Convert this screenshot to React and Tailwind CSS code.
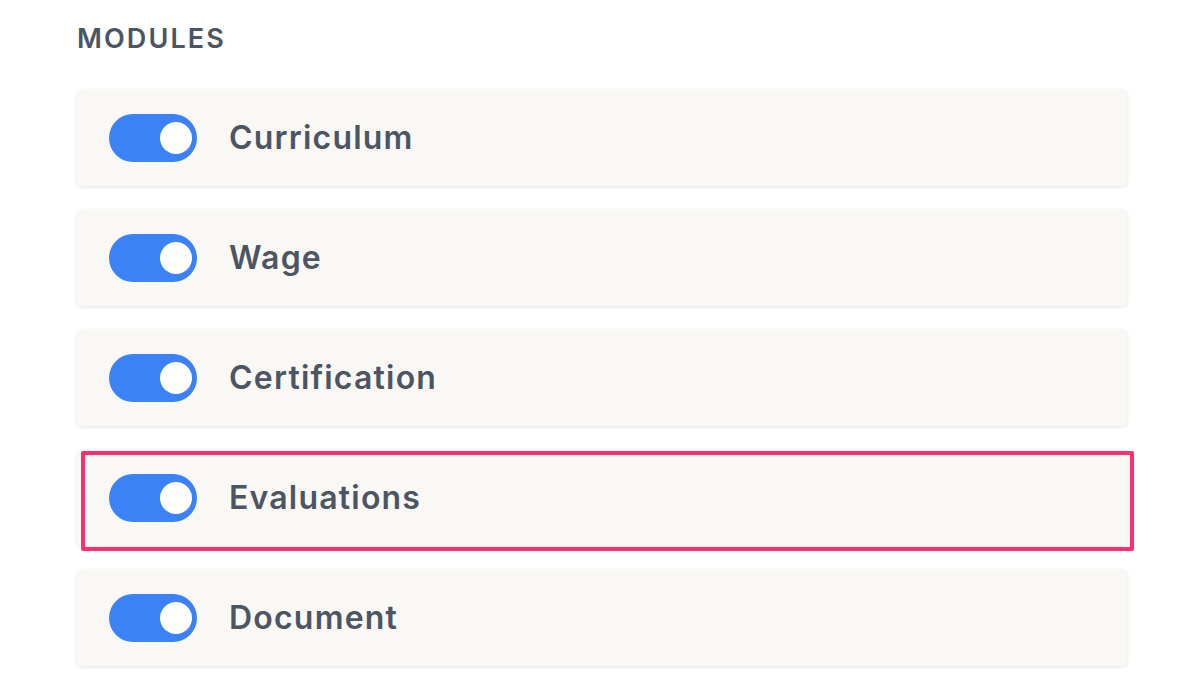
import { useState } from 'react';

const modules = ['Curriculum', 'Wage', 'Certification', 'Evaluations', 'Document'];

const Toggle = ({ on, onChange }) => (
  <button
    onClick={onChange}
    className={`relative flex items-center w-[88px] h-[48px] rounded-full shrink-0 ${on ? 'bg-[#3b82f6]' : 'bg-gray-300'}`}
  >
    <span className={`absolute top-[8px] w-[32px] h-[32px] rounded-full bg-white ${on ? 'left-[51px]' : 'left-[6px]'}`} />
  </button>
);

const App = () => {
  const [enabled, setEnabled] = useState(modules.map(() => true));

  return (
    <div className="w-[1180px] h-[678px] bg-white overflow-hidden font-['Inter',sans-serif]">
      <div className="pl-[77px] pr-[53px] pt-[22px]">
        <h2 className="text-[27px] leading-[34px] font-semibold text-[#4b5563] tracking-[2.1px]">MODULES</h2>

        <div className="mt-[34px] flex flex-col gap-[24px]">
          {modules.map((name, i) => (
            <div key={name} className="relative">
              <div className="flex items-center h-[96px] px-[32px] gap-[32px] rounded-md bg-[#faf8f5] shadow-[0_1px_4px_rgba(0,0,0,0.12)]">
                <Toggle
                  on={enabled[i]}
                  onChange={() => setEnabled(enabled.map((v, j) => (j === i ? !v : v)))}
                />
                <span className="text-[32px] font-semibold text-[#4b5563] tracking-[1.2px]">{name}</span>
              </div>
              {name === 'Evaluations' && (
                <div className="absolute left-[4px] top-[1px] w-[1053px] h-[100px] border-4 border-[#fe2f6d] rounded-[2px] pointer-events-none" />
              )}
            </div>
          ))}
        </div>
      </div>
    </div>
  );
};

export default App;
